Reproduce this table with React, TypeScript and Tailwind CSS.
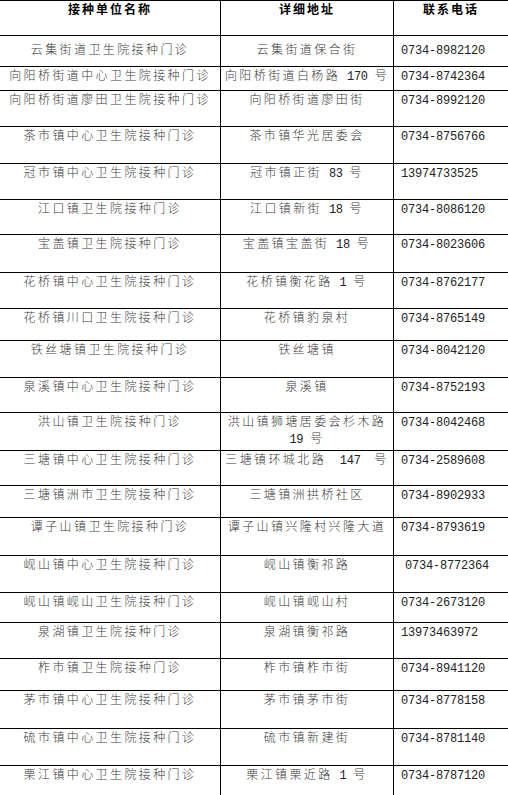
import React from "react";

type Row = { name: string; addr: React.ReactNode; phone: string; h: number; pt?: string; phonePl?: string };

const rows: Row[] = [
  { name: "云集街道卫生院接种门诊", addr: "云集街道保合街", phone: "0734-8982120", h: 31, pt: "pt-[7px]" },
  { name: "向阳桥街道中心卫生院接种门诊", addr: "向阳桥街道白杨路 170 号", phone: "0734-8742364", h: 24 },
  { name: "向阳桥街道廖田卫生院接种门诊", addr: "向阳桥街道廖田街", phone: "0734-8992120", h: 36 },
  { name: "茶市镇中心卫生院接种门诊", addr: "茶市镇华光居委会", phone: "0734-8756766", h: 37 },
  { name: "冠市镇中心卫生院接种门诊", addr: "冠市镇正街 83 号", phone: "13974733525", h: 36 },
  { name: "江口镇卫生院接种门诊", addr: "江口镇新街 18 号", phone: "0734-8086120", h: 35 },
  { name: "宝盖镇卫生院接种门诊", addr: "宝盖镇宝盖街 18 号", phone: "0734-8023606", h: 38 },
  { name: "花桥镇中心卫生院接种门诊", addr: "花桥镇衡花路 1 号", phone: "0734-8762177", h: 36 },
  { name: "花桥镇川口卫生院接种门诊", addr: "花桥镇豹泉村", phone: "0734-8765149", h: 32 },
  { name: "铁丝塘镇卫生院接种门诊", addr: "铁丝塘镇", phone: "0734-8042120", h: 37 },
  { name: "泉溪镇中心卫生院接种门诊", addr: "泉溪镇", phone: "0734-8752193", h: 35 },
  {
    name: "洪山镇卫生院接种门诊",
    addr: (
      <>
        <Seg s="洪山镇狮塘居委会杉木路" />
        <br />
        <Seg s="19 号" />
      </>
    ),
    phone: "0734-8042468",
    h: 38,
  },
  { name: "三塘镇中心卫生院接种门诊", addr: "三塘镇环城北路  147  号", phone: "0734-2589608", h: 35 },
  { name: "三塘镇洲市卫生院接种门诊", addr: "三塘镇洲拱桥社区", phone: "0734-8902933", h: 32 },
  { name: "谭子山镇卫生院接种门诊", addr: "谭子山镇兴隆村兴隆大道", phone: "0734-8793619", h: 38 },
  { name: "岘山镇中心卫生院接种门诊", addr: "岘山镇衡祁路", phone: "0734-8772364", h: 37, phonePl: "pl-[11px]" },
  { name: "岘山镇岘山卫生院接种门诊", addr: "岘山镇岘山村", phone: "0734-2673120", h: 30 },
  { name: "泉湖镇卫生院接种门诊", addr: "泉湖镇衡祁路", phone: "13973463972", h: 36 },
  { name: "柞市镇卫生院接种门诊", addr: "柞市镇柞市街", phone: "0734-8941120", h: 32 },
  { name: "茅市镇中心卫生院接种门诊", addr: "茅市镇茅市街", phone: "0734-8778158", h: 38 },
  { name: "硫市镇中心卫生院接种门诊", addr: "硫市镇新建街", phone: "0734-8781140", h: 37 },
  { name: "栗江镇中心卫生院接种门诊", addr: "栗江镇栗近路 1 号", phone: "0734-8787120", h: 30 },
];

function Seg({ s }: { s: string }) {
  const parts = s.match(/[\u3400-\u9fff]+|[^\u3400-\u9fff]+/g) || [];
  return (
    <>
      {parts.map((p, i) =>
        /[\u3400-\u9fff]/.test(p) ? (
          <span key={i} className="tracking-[2.4px] font-light text-[#3a3a3a]">
            {p}
          </span>
        ) : (
          <span key={i} className="tracking-[-0.3px] whitespace-pre text-[#222]">
            {p}
          </span>
        )
      )}
    </>
  );
}

export default function App() {
  return (
    <div
      className="w-[508px] h-[795px] overflow-hidden bg-white text-[#222] text-[12px] leading-[17px]"
      style={{ fontFamily: '"Liberation Mono", "Noto Sans CJK SC", monospace' }}
    >
      <div className="border-t border-black">
        <div className="flex h-[35px] border-b border-black font-bold text-black">
          <div className="w-[221px] shrink-0 border-r border-black text-center pt-[2px]">
            <span className="tracking-[2px]">接种单位名称</span>
          </div>
          <div className="w-[173px] shrink-0 border-r border-black text-center pt-[2px]">
            <span className="tracking-[2px]">详细地址</span>
          </div>
          <div className="flex-1 text-center pt-[2px]">
            <span className="tracking-[2px]">联系电话</span>
          </div>
        </div>
        {rows.map((r, i) => (
          <div
            key={i}
            className={"flex border-b border-black " + (i === rows.length - 1 ? "border-b-0" : "")}
            style={{ height: r.h }}
          >
            <div className={"w-[221px] shrink-0 border-r border-black text-center " + (r.pt ?? "pt-[2px]")}>
              <Seg s={r.name} />
            </div>
            <div className={"w-[173px] shrink-0 border-r border-black text-center " + (r.pt ?? "pt-[2px]")}>
              {typeof r.addr === "string" ? <Seg s={r.addr} /> : r.addr}
            </div>
            <div className={"flex-1 " + (r.phonePl ?? "pl-[7px]") + " " + (r.pt ?? "pt-[2px]")}>
              <span className="tracking-[-0.2px]">{r.phone}</span>
            </div>
          </div>
        ))}
      </div>
    </div>
  );
}
